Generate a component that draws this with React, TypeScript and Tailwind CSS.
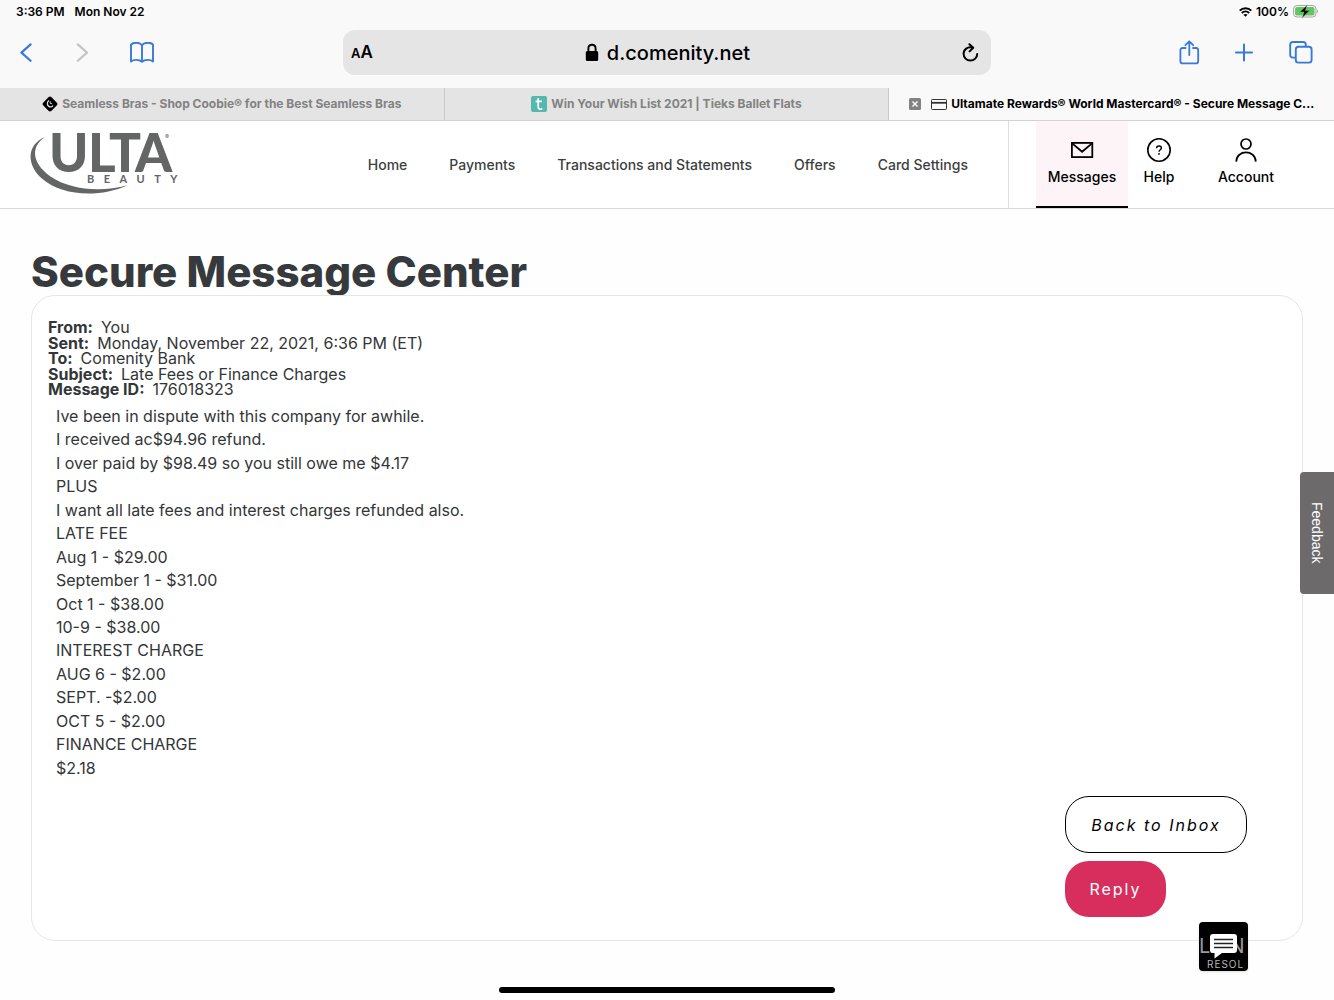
import type { ReactNode } from "react";
import clsx from "clsx";

const navLinks = [
  "Home",
  "Payments",
  "Transactions and Statements",
  "Offers",
  "Card Settings",
];

const details = [
  { label: "From:", value: "You" },
  { label: "Sent:", value: "Monday, November 22, 2021, 6:36 PM (ET)" },
  { label: "To:", value: "Comenity Bank" },
  { label: "Subject:", value: "Late Fees or Finance Charges" },
  { label: "Message ID:", value: "176018323" },
];

const messageLines = [
  "Ive been in dispute with this company for awhile.",
  "I received ac$94.96 refund.",
  "I over paid by $98.49 so you still owe me $4.17",
  "PLUS",
  "I want all late fees and interest charges refunded also.",
  "LATE FEE",
  "Aug 1 - $29.00",
  "September 1 - $31.00",
  "Oct 1 - $38.00",
  "10-9 - $38.00",
  "INTEREST CHARGE",
  "AUG 6 - $2.00",
  "SEPT. -$2.00",
  "OCT 5 - $2.00",
  "FINANCE CHARGE",
  "$2.18",
];

function StatusBar() {
  return (
    <div className="flex h-6 items-center justify-between px-4 pb-px text-xs font-semibold text-black">
      <div className="flex gap-[10px]">
        <span>3:36 PM</span>
        <span>Mon Nov 22</span>
      </div>
      <div className="flex items-center gap-1">
        <svg width="13" height="10" viewBox="0 0 13 10" fill="none" stroke="#000" strokeWidth="1.9">
          <path d="M0.7 3.6C3.9 0.4 9.1 0.4 12.3 3.6" />
          <path d="M2.8 6C4.9 4 8.1 4 10.2 6" />
          <path d="M6.5 9.8L4.4 7.8C5.6 6.8 7.4 6.8 8.6 7.8Z" fill="#000" stroke="none" />
        </svg>
        <span>100%</span>
        <svg width="25" height="13" viewBox="0 0 25 13">
          <rect x="0.5" y="0.5" width="22.5" height="11.5" rx="3.5" fill="none" stroke="#a5a5a5" />
          <rect x="2" y="2" width="19.5" height="8.5" rx="2" fill="#65c466" />
          <path d="M24 4.5V8.2C25.2 7.6 25.2 5.1 24 4.5Z" fill="#a5a5a5" />
          <path
            d="M14 0.3L6.8 7H11L9.4 12.7L16.6 5.6H12.4Z"
            fill="#000"
            stroke="#65c466"
            strokeWidth="0.5"
          />
        </svg>
      </div>
    </div>
  );
}

function Toolbar() {
  return (
    <div className="grid h-16 grid-cols-[343fr_648fr_343fr] items-start pt-[6px] text-[#3b78dc]">
      <div className="flex h-[45px] items-center pl-5">
        <button aria-label="Back" className="w-14">
          <svg width="13" height="20" viewBox="0 0 13 20" fill="none" stroke="currentColor" strokeWidth="2.2" strokeLinecap="round" strokeLinejoin="round">
            <path d="M10.6 1.4L1.4 9.6L10.6 17.8" />
          </svg>
        </button>
        <button aria-label="Forward" className="w-[53px] text-[#c4c4c6]">
          <svg width="13" height="20" viewBox="0 0 13 20" fill="none" stroke="currentColor" strokeWidth="2.2" strokeLinecap="round" strokeLinejoin="round">
            <path d="M1.8 1.4L11 9.6L1.8 17.8" />
          </svg>
        </button>
        <button aria-label="Bookmarks">
          <svg width="26" height="22" viewBox="0 0 26 22" fill="none" stroke="currentColor" strokeWidth="1.9" strokeLinejoin="round">
            <path d="M13 3.2C10.6 0 4.2 0 2 2.6V19.6C4.6 17.2 10.4 17.4 13 19.8C15.6 17.4 21.4 17.2 24 19.6V2.6C21.8 0 15.4 0 13 3.2ZM13 3.2V19.8" />
          </svg>
        </button>
      </div>

      {/* Address bar */}
      <div className="flex h-[45px] items-center justify-between rounded-xl bg-[#e5e5e5] pl-2 pr-3 text-black">
        <button aria-label="Text size" className="font-semibold leading-none">
          <span className="text-[13px]">A</span>
          <span className="text-[17px]">A</span>
        </button>
        <button className="flex items-center gap-2 text-xl font-medium">
          <svg width="14" height="20" viewBox="0 0 14 20">
            <rect x="0.8" y="8" width="12.4" height="10" rx="1.6" />
            <path d="M3.4 9V5.4C3.4 0.5 10.6 0.5 10.6 5.4V9" fill="none" stroke="#000" strokeWidth="1.9" />
          </svg>
          d.comenity.net
        </button>
        <button aria-label="Reload">
          <svg width="17" height="20" viewBox="0 0 17 20" fill="none" stroke="currentColor" strokeWidth="2" strokeLinecap="round" strokeLinejoin="round">
            <path d="M10.5 4.7C5.5 3.2 1.6 6.6 1.6 10.8C1.6 14.6 4.6 17.6 8.4 17.6C12.2 17.6 15.2 14.6 15.2 11" />
            <path d="M7.4 1.2L11.2 4.8L7.6 8.4" />
          </svg>
        </button>
      </div>

      <div className="flex h-[45px] items-center justify-end gap-[34px] pr-5">
        <button aria-label="Share">
          <svg width="21" height="26" viewBox="0 0 21 26" fill="none" stroke="currentColor" strokeWidth="1.8" strokeLinecap="round" strokeLinejoin="round">
            <path d="M6.6 8H3.6C2.2 8 1.4 8.8 1.4 10.2V21.2C1.4 22.6 2.2 23.4 3.6 23.4H17C18.4 23.4 19.2 22.6 19.2 21.2V10.2C19.2 8.8 18.4 8 17 8H14" />
            <path d="M10.3 15V1.5M6.4 5.2L10.3 1.3L14.2 5.2" />
          </svg>
        </button>
        <button aria-label="New tab">
          <svg width="20" height="20" viewBox="0 0 20 20" stroke="currentColor" strokeWidth="2" strokeLinecap="round">
            <path d="M10 1.6V17.6M2 9.6H18" />
          </svg>
        </button>
        <button aria-label="Show tabs">
          <svg width="26" height="24" viewBox="0 0 26 24" fill="none" stroke="currentColor" strokeWidth="1.9">
            <rect x="7.8" y="5.8" width="15.8" height="15.8" rx="2.6" />
            <path d="M7.4 16.6H4.8C3.2 16.6 2.2 15.6 2.2 14V3.6C2.2 2 3.2 1 4.8 1H15.2C16.8 1 17.8 2 17.8 3.6V5.4" />
          </svg>
        </button>
      </div>
    </div>
  );
}

interface TabProps {
  title: string;
  icon: ReactNode;
  active?: boolean;
}

function Tab({ title, icon, active }: TabProps) {
  return (
    <div
      className={clsx(
        "flex min-w-0 items-center justify-center",
        active
          ? "gap-[10px] bg-[#f9f9f9] px-[10px] text-black"
          : "border-r border-[#c9c9c9] bg-[#e4e4e4] px-4 text-[#828282]"
      )}
    >
      {active && (
        <button aria-label="Close tab" className="shrink-0">
          <svg width="12" height="12" viewBox="0 0 12 12">
            <rect width="12" height="12" rx="1.5" fill="#838383" />
            <path d="M3.5 3.5L8.5 8.5M8.5 3.5L3.5 8.5" stroke="#fff" strokeWidth="1.4" />
          </svg>
        </button>
      )}
      <a href="#" className="flex min-w-0 items-center gap-1">
        <span className="shrink-0">{icon}</span>
        <span className="whitespace-nowrap">{title}</span>
      </a>
    </div>
  );
}

function TabBar() {
  return (
    <div className="grid h-[33px] grid-cols-3 border-b border-[#d2d2d2] text-xs font-bold">
      <Tab
        title="Seamless Bras - Shop Coobie® for the Best Seamless Bras"
        icon={
          <svg width="16" height="16" viewBox="0 0 16 16">
            <rect x="2.2" y="2.2" width="11.6" height="11.6" rx="2.2" transform="rotate(45 8 8)" />
            <path d="M7 4.6C4.6 6 4.8 10.6 8.2 10.9C9.6 11 10.6 10.2 11 9.4" fill="none" stroke="#e4e4e4" strokeWidth="1.2" />
            <path d="M8.2 5.2V7.4L10.2 7.8" fill="none" stroke="#e4e4e4" strokeWidth="0.9" />
          </svg>
        }
      />
      <Tab
        title="Win Your Wish List 2021 | Tieks Ballet Flats"
        icon={
          <svg width="16" height="16" viewBox="0 0 16 16">
            <rect width="16" height="16" rx="2" fill="#55b8b0" />
            <path d="M7.2 2V10.8C7.2 13.6 9.6 13.7 11.2 12.5M4.6 5.4H11" fill="none" stroke="#fff" strokeWidth="1.7" />
          </svg>
        }
      />
      <Tab
        active
        title="Ultamate Rewards® World Mastercard® - Secure Message C..."
        icon={
          <svg width="16" height="11" viewBox="0 0 16 11" fill="none" stroke="#333">
            <rect x="0.5" y="0.5" width="15" height="10" rx="0.8" />
            <path d="M0.5 3.8H15.5" strokeWidth="1.8" />
          </svg>
        }
      />
    </div>
  );
}

function Logo() {
  return (
    <svg width="150" height="64" viewBox="0 0 150 64" fill="#646665" role="img" aria-label="Ulta Beauty">
      <path d="M15 4C-2.5 11-5 31 12.5 46C31 62.5 69 65.5 97.5 52.2C72 59 41 57.5 20.5 43.5C2 30.5 0 14 15 4Z" />
      <g fontFamily="Lato, sans-serif">
        <g fontSize="53" fontWeight="900">
          <text x="19" y="39">U</text>
          <text x="58" y="39">L</text>
          <text x="79" y="39">T</text>
          <text x="105" y="39">A</text>
        </g>
        <text x="57" y="50" fontSize="11" fontWeight="700" letterSpacing="9.5">BEAUTY</text>
      </g>
      <text x="135" y="6" fontSize="6" fontFamily="Inter, sans-serif">®</text>
    </svg>
  );
}

function SiteHeader() {
  return (
    <header className="flex h-22 border-b border-[#d9d9d9] bg-white">
      <div className="flex flex-1 items-center justify-between border-r border-[#dcdcdc] pl-[30px] pr-10">
        <a href="#">
          <Logo />
        </a>
        <nav className="flex gap-[42px] text-sm font-medium text-[#3c3f40]">
          {navLinks.map((link) => (
            <a key={link} href="#">
              {link}
            </a>
          ))}
        </nav>
      </div>
      <div className="flex pl-[27px] pr-8 text-sm font-medium text-black">
        <a href="#" className="flex w-[92px] flex-col items-center border-b-2 border-black bg-[#fcf4f6] pt-4">
          <svg width="26" height="26" viewBox="0 0 26 26" fill="none" stroke="currentColor" strokeWidth="1.8">
            <rect x="2.9" y="5.9" width="20.4" height="14.2" />
            <path d="M3.2 6.4L13.1 14.8L23 6.4" />
          </svg>
          <span className="mt-1">Messages</span>
        </a>
        <a href="#" className="flex w-[62px] flex-col items-center pt-4">
          <svg width="26" height="26" viewBox="0 0 26 26" fill="none" stroke="currentColor" strokeWidth="1.6">
            <circle cx="13" cy="13" r="11.2" />
            <path d="M10.6 11.2C10.6 8.3 15.4 8.4 15.4 11.1C15.4 12.8 13 12.8 13 14.8" strokeWidth="1.4" />
            <circle cx="13" cy="16.9" r="0.9" fill="currentColor" stroke="none" />
          </svg>
          <span className="mt-1">Help</span>
        </a>
        <a href="#" className="flex w-[112px] flex-col items-center pt-4">
          <svg width="26" height="26" viewBox="0 0 26 26" fill="none" stroke="currentColor" strokeWidth="1.7">
            <circle cx="13" cy="7" r="5" />
            <path d="M3.2 24.6C3.6 12.4 22.4 12.4 22.8 24.6" />
          </svg>
          <span className="mt-1">Account</span>
        </a>
      </div>
    </header>
  );
}

function MessageCard() {
  return (
    <section className="relative rounded-3xl border border-[#e6e6e6] bg-white px-4 pb-[23px] pt-6 text-base text-[#333637]">
      <dl className="grid min-h-[78px] auto-rows-fr leading-[15px]">
        {details.map(({ label, value }) => (
          <div key={label} className="flex gap-2">
            <dt className="font-bold">{label}</dt>
            <dd>{value}</dd>
          </div>
        ))}
      </dl>
      <div className="mt-[7px] grid min-h-[375px] auto-rows-fr pl-2 leading-[23px]">
        {messageLines.map((line) => (
          <p key={line}>{line}</p>
        ))}
      </div>
      <div className="mt-4 flex justify-end pr-[39px]">
        <div className="flex w-[182px] flex-col items-start gap-2">
          <button className="h-[57px] w-full rounded-3xl border border-black bg-white text-base italic tracking-[2px] text-black">
            Back to Inbox
          </button>
          <button className="h-14 w-[101px] rounded-3xl bg-[#d72e5e] text-base tracking-[2px] text-white">
            Reply
          </button>
        </div>
      </div>
    </section>
  );
}

function ChatButton() {
  return (
    <button
      aria-label="Open chat"
      className="absolute right-[86px] top-[922px] h-[49px] w-[49px] overflow-hidden rounded bg-black shadow"
    >
      <span className="absolute left-0 top-3 text-xl leading-6 text-[#9a9a9a]">LAIN</span>
      <svg className="absolute left-[10px] top-[11px]" width="29" height="26" viewBox="0 0 29 26">
        <path
          d="M4 1H25C27 1 28 2 28 4V17C28 19 27 20 25 20H13L5.5 25.5V20H4C2 20 1 19 1 17V4C1 2 2 1 4 1Z"
          fill="#fff"
        />
        <path d="M5 6.5H24M5 10.5H24M5 14.5H24" stroke="#222" strokeWidth="1.5" />
      </svg>
      <span className="absolute left-2 top-9 text-[10px] leading-3 tracking-widest text-[#b5b5b5]">RESOL</span>
    </button>
  );
}

export default function App() {
  return (
    <div className="relative flex min-h-screen flex-col overflow-hidden bg-[#fefefe] font-['Inter',sans-serif]">
      <div className="bg-[#f9f9f9]">
        <StatusBar />
        <Toolbar />
        <TabBar />
      </div>
      <SiteHeader />

      <main className="px-[31px] pt-10">
        <h1 className="h-[46px] text-[42px] font-extrabold leading-[46px] text-[#363a3c]">
          Secure Message Center
        </h1>
        <MessageCard />
      </main>

      <div className="mx-auto mb-[7px] mt-auto h-[6px] w-[336px] rounded-full bg-black" />

      <button className="absolute right-0 top-[472px] h-[122px] w-[34px] rounded-l bg-[#6c6a6a] font-['Liberation_Sans',sans-serif] text-sm text-white [writing-mode:vertical-rl]">
        Feedback
      </button>
      <ChatButton />
    </div>
  );
}
